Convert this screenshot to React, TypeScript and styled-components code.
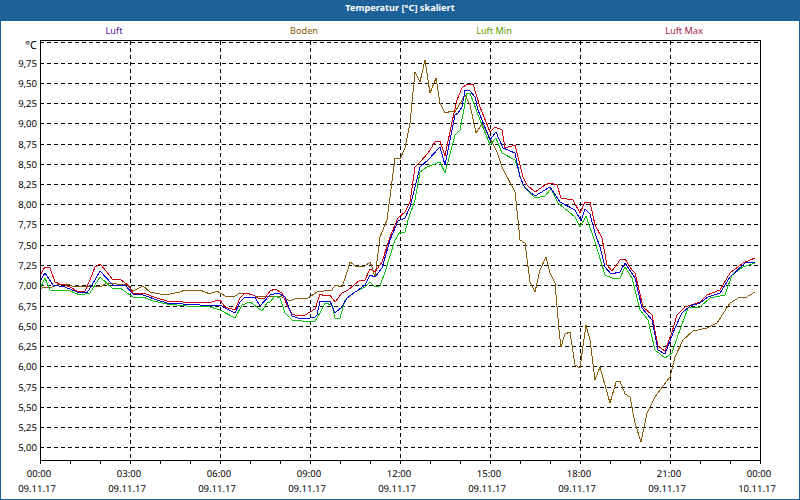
import { createGlobalStyle } from 'styled-components';
import styled from 'styled-components';

const GlobalStyle = createGlobalStyle`
  html, body {
    margin: 0;
    padding: 0;
    background: #fff;
  }
`;

type Pt = [number, number];

const luftMax: Pt[] = [[40,275],[45,267],[50,268],[55,282],[60,284],[65,285],[70,287],[77,291],[85,291],[90,280],[95,267],[100,264],[107,272],[113,280],[120,279],[128,285],[133,293],[143,293],[157,298],[167,301],[183,302],[200,302],[210,303],[217,300],[220,300],[225,307],[235,310],[240,298],[245,293],[253,295],[258,298],[265,298],[270,291],[275,289],[282,293],[287,305],[292,314],[298,316],[305,315],[310,312],[315,309],[320,294],[325,296],[330,295],[335,302],[342,293],[348,290],[360,280],[365,280],[370,269],[375,272],[382,262],[390,237],[398,218],[405,212],[410,202],[415,167],[420,162],[428,153],[435,142],[440,141],[445,156],[452,122],[457,100],[462,88],[467,84],[473,84],[480,107],[490,132],[495,127],[502,130],[505,148],[515,145],[523,177],[527,185],[535,192],[545,185],[550,183],[557,185],[561,198],[573,200],[580,213],[585,202],[590,202],[595,225],[602,238],[607,265],[612,271],[620,260],[625,259],[632,270],[635,273],[643,307],[652,315],[658,346],[665,351],[672,332],[677,315],[685,307],[700,302],[707,295],[720,290],[730,273],[743,263],[755,258]];

const luft: Pt[] = [[40,281],[45,273],[53,285],[65,287],[77,292],[87,293],[92,285],[100,271],[113,285],[125,285],[133,294],[143,295],[157,300],[167,303],[183,304],[200,305],[217,305],[220,305],[225,308],[235,313],[240,302],[245,297],[255,297],[260,306],[270,295],[278,293],[285,297],[292,316],[298,318],[310,318],[315,317],[317,315],[320,301],[330,301],[335,313],[342,307],[347,298],[365,285],[370,275],[375,277],[382,268],[390,240],[398,221],[405,218],[410,207],[420,167],[428,160],[440,147],[445,165],[455,115],[458,113],[462,107],[465,90],[470,91],[475,97],[478,110],[490,140],[496,132],[503,148],[515,153],[520,177],[525,188],[535,196],[550,187],[560,202],[575,210],[581,221],[585,209],[590,214],[595,233],[600,247],[605,267],[611,274],[620,272],[625,263],[635,278],[642,308],[652,320],[658,350],[665,354],[675,328],[682,313],[690,306],[700,303],[708,297],[720,293],[730,277],[745,263],[755,262]];

const luftMin: Pt[] = [[40,289],[45,278],[50,290],[57,290],[70,291],[80,295],[90,293],[100,277],[113,289],[120,288],[133,297],[143,297],[153,301],[167,304],[187,306],[207,306],[220,310],[235,318],[242,305],[250,302],[257,307],[262,311],[267,303],[270,302],[275,296],[280,298],[285,313],[292,320],[302,321],[310,322],[315,321],[320,313],[325,303],[332,305],[335,318],[340,318],[345,300],[353,293],[365,287],[370,282],[375,287],[380,286],[385,272],[395,240],[400,232],[405,232],[408,220],[415,200],[420,172],[427,167],[440,162],[445,173],[455,135],[460,130],[467,93],[470,93],[480,120],[490,145],[496,138],[502,153],[515,160],[523,185],[535,198],[545,196],[551,189],[558,203],[575,217],[580,227],[586,216],[595,242],[605,275],[612,278],[620,278],[625,267],[632,278],[640,310],[648,320],[655,350],[665,358],[672,353],[677,338],[688,308],[700,307],[710,298],[725,295],[732,275],[743,267],[755,263]];

const boden: Pt[] = [[40,290],[43,287],[50,288],[57,285],[67,284],[75,287],[85,286],[100,287],[107,283],[127,285],[133,291],[143,286],[150,292],[165,295],[180,292],[185,290],[200,290],[210,294],[217,291],[225,296],[235,296],[240,293],[250,294],[258,297],[267,296],[280,296],[290,301],[297,298],[308,298],[317,292],[332,290],[335,285],[342,287],[347,272],[350,262],[357,267],[365,266],[370,262],[372,267],[375,277],[380,237],[387,220],[395,158],[400,159],[405,148],[410,123],[415,72],[420,82],[425,60],[430,93],[436,78],[440,103],[445,113],[452,111],[455,112],[465,95],[470,105],[476,133],[482,124],[490,138],[497,152],[502,167],[515,192],[518,220],[520,240],[525,243],[530,282],[535,292],[540,270],[546,257],[550,273],[555,283],[559,330],[561,347],[565,334],[570,332],[575,365],[580,368],[586,325],[590,340],[595,380],[600,367],[610,403],[616,382],[620,381],[625,394],[630,397],[635,423],[641,442],[647,413],[655,397],[670,377],[675,357],[683,340],[693,331],[707,328],[717,323],[730,303],[740,297],[745,298],[755,292]];

const series = [
  { name: 'Boden', color: '#8b5a0a', pts: boden },
  { name: 'Luft Min', color: '#10c010', pts: luftMin },
  { name: 'Luft Max', color: '#d00010', pts: luftMax },
  { name: 'Luft', color: '#0000d8', pts: luft },
];

const yLabels = ['9,75','9,50','9,25','9,00','8,75','8,50','8,25','8,00','7,75','7,50','7,25','7,00','6,75','6,50','6,25','6,00','5,75','5,50','5,25','5,00'];
const yPos = [63,83,103,123,144,164,184,204,224,245,265,285,306,326,346,366,387,407,427,447];

const xTicks = [
  ['00:00','09.11.17'],['03:00','09.11.17'],['06:00','09.11.17'],['09:00','09.11.17'],['12:00','09.11.17'],
  ['15:00','09.11.17'],['18:00','09.11.17'],['21:00','09.11.17'],['00:00','10.11.17'],
];

const Window = styled.div`
  width: 800px;
  height: 500px;
  box-sizing: border-box;
  display: flex;
  flex-direction: column;
  background: #fff;
  border-left: 1px solid #1c6197;
  border-right: 1px solid #1c6197;
  border-bottom: 1px solid #1c6197;
  overflow: hidden;
  font-family: "Noto Sans", sans-serif;
`;

const TitleBar = styled.div`
  height: 21px;
  margin: 0 -1px;
  flex: none;
  background: #1c6197;
  color: #fff;
  font: bold 9.2px/16px "Noto Sans", sans-serif;
  text-align: center;
`;

const Legend = styled.div`
  flex: none;
  height: 15px;
  padding-left: 18px;
  display: grid;
  grid-template-columns: repeat(4, 190px);
`;

const LegendItem = styled.div<{ $color: string }>`
  color: ${(p) => p.$color};
  font-size: 9.2px;
  line-height: 19px;
  text-align: center;
`;

const Plot = styled.svg`
  display: block;
  flex: none;
  margin-left: -1px;
`;

const AxisText = styled.text<{ $size?: number }>`
  font: ${(p) => p.$size ?? 9.5}px "Noto Sans", sans-serif;
  fill: #000;
`;

export default function App() {
  return (
    <>
      <GlobalStyle />
      <Window>
        <TitleBar>Temperatur [°C] skaliert</TitleBar>
        <Legend>
          <LegendItem $color="#5a10a0">Luft</LegendItem>
          <LegendItem $color="#8b5a0a">Boden</LegendItem>
          <LegendItem $color="#5f9a00">Luft Min</LegendItem>
          <LegendItem $color="#a81850">Luft Max</LegendItem>
        </Legend>
        <Plot width={800} height={463} viewBox="0 36 800 463" shapeRendering="crispEdges">
          {yPos.map((y) => (
            <line key={y} x1={40} x2={760} y1={y + 0.5} y2={y + 0.5} stroke="#000" strokeDasharray="4 3" />
          ))}
          <line x1={40} x2={760} y1={42.5} y2={42.5} stroke="#000" strokeDasharray="4 3" />
          {[130, 220, 310, 400, 490, 580, 670].map((x) => (
            <line key={x} x1={x + 0.5} x2={x + 0.5} y1={41} y2={460} stroke="#000" strokeDasharray="4 3" />
          ))}
          {series.map((s) => (
            <polyline key={s.name} points={s.pts.map((p) => p.join(',')).join(' ')} fill="none" stroke={s.color} strokeWidth={1} />
          ))}
          <rect x={40.5} y={40.5} width={720} height={420} fill="none" stroke="#000" />
          {Array.from({ length: 25 }, (_, i) => 40 + i * 30).map((x) => (
            <line key={x} x1={x + 0.5} x2={x + 0.5} y1={460} y2={464} stroke="#000" />
          ))}
          <g textRendering="geometricPrecision">
            <AxisText x={37} y={49} textAnchor="end" $size={11}>°C</AxisText>
            {yLabels.map((t, i) => (
              <AxisText key={t} x={37} y={yPos[i] + 4} textAnchor="end">{t}</AxisText>
            ))}
            {xTicks.map(([time, date], i) => (
              <g key={i}>
                <AxisText x={39 + i * 90} y={477} textAnchor="middle">{time}</AxisText>
                <AxisText x={37 + i * 90} y={492} textAnchor="middle">{date}</AxisText>
              </g>
            ))}
          </g>
        </Plot>
      </Window>
    </>
  );
}
